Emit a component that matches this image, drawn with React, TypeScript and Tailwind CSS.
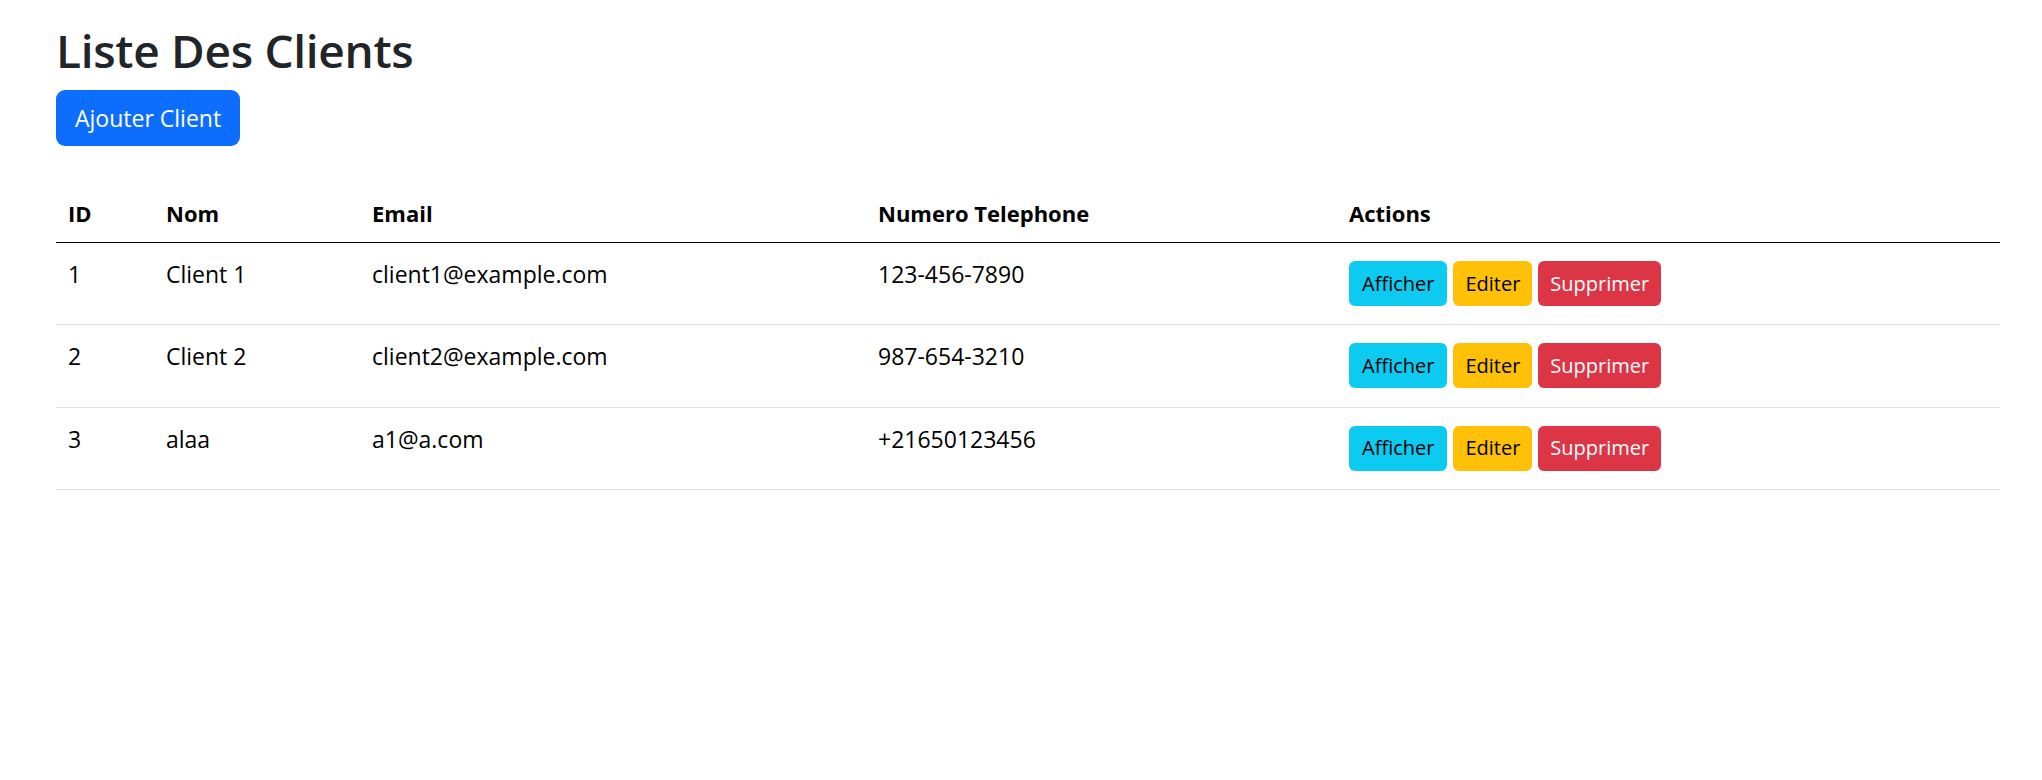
const clients = [
  { id: 1, nom: "Client 1", email: "client1@example.com", tel: "123-456-7890" },
  { id: 2, nom: "Client 2", email: "client2@example.com", tel: "987-654-3210" },
  { id: 3, nom: "alaa", email: "a1@a.com", tel: "+21650123456" },
];

function ActionButtons() {
  return (
    <div className="flex gap-[6px]">
      <button className="h-[45px] px-[13px] rounded-[6px] bg-[#0dcaf0] text-black text-[20px] leading-none">
        Afficher
      </button>
      <button className="h-[45px] px-[12px] rounded-[6px] bg-[#ffc107] text-black text-[20px] leading-none">
        Editer
      </button>
      <button className="h-[45px] px-[12px] rounded-[6px] bg-[#dc3545] text-white text-[20px] leading-none">
        Supprimer
      </button>
    </div>
  );
}

export default function App() {
  const th = "text-left font-bold text-[22px] leading-[34px] px-[12px] pt-[11px] pb-[12px] border-b border-black";
  const td = "align-top px-[12px] pt-[14px] text-[23px] leading-[34px] border-b border-[#dee2e6]";

  return (
    <div className="min-h-screen bg-white pl-[56px] pr-[42px] pt-[22px] font-['Open_Sans',sans-serif]">
      <h1 className="text-[46px] leading-[56px] font-semibold tracking-[-0.3px] text-[#212529]">Liste Des Clients</h1>
      <button className="mt-[12px] h-[56px] px-[19px] rounded-[9px] bg-[#0d6efd] text-white text-[23px] leading-none">
        Ajouter Client
      </button>

      <table className="mt-[39px] w-full table-fixed border-collapse text-black">
        <colgroup>
          <col className="w-[98px]" />
          <col className="w-[206px]" />
          <col className="w-[506px]" />
          <col className="w-[471px]" />
          <col />
        </colgroup>
        <thead>
          <tr>
            <th className={th}>ID</th>
            <th className={th}>Nom</th>
            <th className={th}>Email</th>
            <th className={th}>Numero Telephone</th>
            <th className={th}>Actions</th>
          </tr>
        </thead>
        <tbody>
          {clients.map((c) => (
            <tr key={c.id}>
              <td className={td}>{c.id}</td>
              <td className={td}>{c.nom}</td>
              <td className={td}>{c.email}</td>
              <td className={td}>{c.tel}</td>
              <td className="align-top px-[12px] pt-[18px] pb-[18.33px] border-b border-[#dee2e6]">
                <ActionButtons />
              </td>
            </tr>
          ))}
        </tbody>
      </table>
    </div>
  );
}
